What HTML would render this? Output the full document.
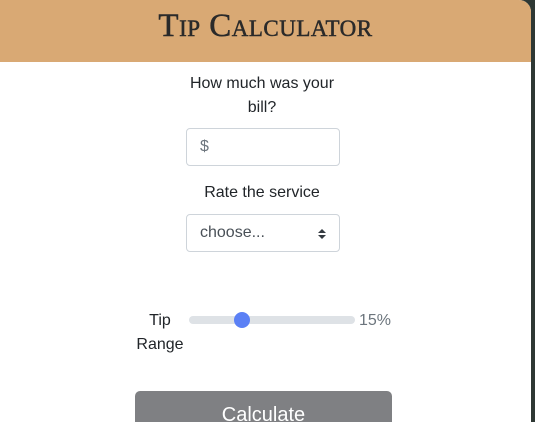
<!DOCTYPE html>
<html><head><meta charset="utf-8"><style>
html,body{margin:0;padding:0;width:535px;height:422px;overflow:hidden;background:#2e3834;}
.card{position:absolute;left:0;top:0;width:531px;height:422px;background:#fff;border-top-right-radius:12px;overflow:hidden;font-family:"Liberation Sans",sans-serif;color:#212529;}
.hdr{position:absolute;left:0;top:0;width:531px;height:62px;background:#d9a974;}
.hdr h1{margin:0;position:absolute;left:0;right:0;top:8px;text-align:center;font-family:"Liberation Serif",serif;font-variant:small-caps;font-weight:normal;-webkit-text-stroke:0.5px #2a2a2a;font-size:33px;color:#2a2a2a;letter-spacing:0.5px;}
.t{position:absolute;font-size:16px;text-align:center;line-height:24px;}
.box{position:absolute;border:1px solid #ced4da;border-radius:4px;background:#fff;box-sizing:border-box;font-size:16px;color:#6c757d;}
.track{position:absolute;left:189px;top:316px;width:166px;height:8px;border-radius:4px;background:#dee2e6;}
.thumb{position:absolute;left:234px;top:312px;width:16px;height:16px;border-radius:50%;background:#5b80f5;}
.btn{position:absolute;left:135px;top:391px;width:257px;height:50px;background:#7f8083;border-radius:5px;color:#fff;font-size:20px;text-align:center;line-height:48px;}
</style></head><body>
<div class="card">
<div class="hdr"><h1>Tip Calculator</h1></div>
<div class="t" style="left:172px;width:180px;top:72px;">How much was your<br>bill?</div>
<div class="box" style="left:186px;top:128px;width:154px;height:38px;"><span style="position:absolute;left:13px;top:9px;">$</span></div>
<div class="t" style="left:172px;width:180px;top:181px;">Rate the service</div>
<div class="box" style="left:186px;top:214px;width:154px;height:38px;color:#495057;"><span style="position:absolute;left:13px;top:9px;">choose...</span>
<svg style="position:absolute;left:130px;top:12px" width="10" height="14" viewBox="0 0 10 14"><path d="M1 6 L5 2 L9 6Z M1 8 L5 12 L9 8Z" fill="#343a40"/></svg></div>
<div class="t" style="left:125px;width:70px;top:309px;">Tip<br>Range</div>
<div class="track"></div><div class="thumb"></div>
<div class="t" style="left:359px;top:309px;color:#6c757d;font-size:16px;">15%</div>
<div class="btn">Calculate</div>
</div>
</body></html>
